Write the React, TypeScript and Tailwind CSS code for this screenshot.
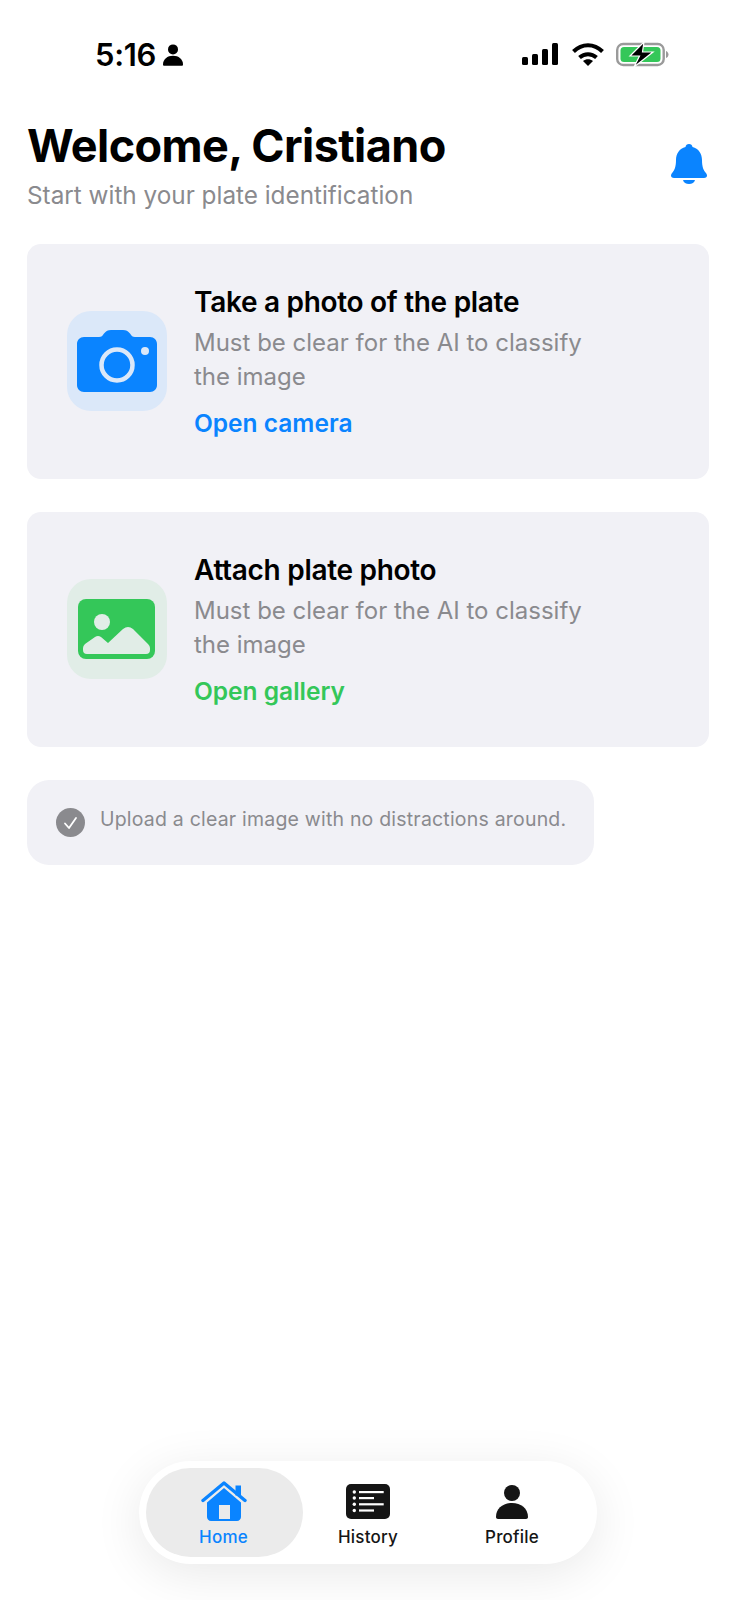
const CameraIcon = () => (
    <svg width="80" height="62" viewBox="0 0 80 62" aria-hidden="true">
        <path fillRule="evenodd" fill="#0a84ff" d="M7 7h15c2.500 0 3.500-1 5-3.500C29 1 31 0 34 0h12c3 0 5 1 7 3.500 1.500 2.500 2.500 3.500 5 3.500h15c4 0 7 3 7 7v41c0 4-3 7-7 7H7c-4 0-7-3-7-7V14c0-4 3-7 7-7Z" />
        <circle cx="40" cy="35" r="15.500" fill="none" stroke="#dbe8f9" strokeWidth="4.500" />
        <circle cx="68" cy="21" r="4" fill="#dbe8f9" />
    </svg>
)

const GalleryIcon = () => (
    <svg className="-ml-[1px]" width="77" height="60" viewBox="0 0 77 60" aria-hidden="true">
        <rect width="77" height="60" rx="8" fill="#34c759" />
        <circle cx="24" cy="23" r="8" fill="#e1ede7" />
        <path fill="#e1ede7" d="M5 49Q5 47 7 45L17 38Q20 36 23 38L30 44 45 30Q50 26 55 30L70 45Q72 47 72 49V51Q72 55 68 55H9Q5 55 5 51Z" />
    </svg>
)

const HomeIcon = () => (
    <svg className="-mb-[2px]" width="46" height="40" viewBox="0 0 46 40" aria-hidden="true">
        <path fillRule="evenodd" fill="#0a84ff" d="M23 7 6 21.500V36c0 2.200 1.800 4 4 4h26c2.200 0 4-1.800 4-4V21.500L23 7Zm-5 17h11v14H18V24Z" />
        <path fill="none" stroke="#0a84ff" strokeWidth="3.400" strokeLinecap="round" strokeLinejoin="round" d="M2 19.500 23 2l21 17.500" />
        <rect x="34.500" y="4.500" width="5.500" height="10" fill="#0a84ff" />
    </svg>
)

const HistoryIcon = () => (
    <svg width="44" height="35" viewBox="0 0 44 35" aria-hidden="true">
        <rect width="44" height="35" rx="5" fill="#151515" />
        <g fill="#fff">
            <circle cx="8.300" cy="8" r="1.700" /><circle cx="8.300" cy="14" r="1.700" /><circle cx="8.300" cy="20.300" r="1.700" /><circle cx="8.300" cy="26.500" r="1.700" />
            <rect x="13" y="7" width="24.700" height="2.200" /><rect x="13" y="13" width="15" height="2.200" /><rect x="13" y="19.200" width="24.700" height="2.200" /><rect x="13" y="25.400" width="15" height="2.200" />
        </g>
    </svg>
)

const ProfileIcon = ({ className }: { className: string }) => (
    <svg className={className} viewBox="0 0 32 34" aria-hidden="true">
        <circle cx="16" cy="8" r="8" fill="currentColor" />
        <path fill="currentColor" d="M0 32c0-8.500 7-14 16-14s16 5.500 16 14c0 1.200-.8 2-2 2H2c-1.200 0-2-.8-2-2Z" />
    </svg>
)

const StatusIcons = () => (
    <div className="mb-[2px] flex items-center">
        <svg width="36" height="22" viewBox="0 0 36 22" aria-hidden="true">
            <rect x="0" y="14" width="6" height="8" rx="1.500" fill="#000" />
            <rect x="10" y="11" width="6" height="11" rx="1.500" fill="#000" />
            <rect x="20" y="6" width="6" height="16" rx="1.500" fill="#000" />
            <rect x="30" y="0" width="6" height="22" rx="1.500" fill="#000" />
        </svg>
        <svg className="ml-[14px]" width="32" height="23" viewBox="0 0 32 23" aria-hidden="true">
            <path fill="none" stroke="#000" strokeWidth="4" d="M1.500 8.500C10 0 22 0 30.500 8.500" />
            <path fill="none" stroke="#000" strokeWidth="4" d="M7.500 14.500c5-4.500 12-4.500 17 0" />
            <path fill="#000" d="M11 18c3-2.500 7-2.500 10 0l-5 5Z" />
        </svg>
        <svg className="ml-[12px]" width="53" height="25" viewBox="0 0 53 25" aria-hidden="true">
            <rect x="1.200" y="2" width="46.500" height="21" rx="6" fill="none" stroke="#9a9a9a" strokeWidth="2.400" />
            <rect x="4.500" y="5" width="40" height="15" rx="3.500" fill="#34c759" />
            <path d="M50 9v7c1.500-.5 2.500-2 2.500-3.500S51.500 9.500 50 9Z" fill="#9a9a9a" />
            <path d="M28 0 14 14h9.500L18 25 37 10H26.500Z" fill="#000" stroke="#fff" strokeWidth="1.200" />
        </svg>
    </div>
)

const BellIcon = () => (
    <svg width="36" height="40" viewBox="0 0 36 40" aria-hidden="true">
        <path fill="#0a84ff" d="M18 0c2 0 3.200 1.300 3.500 3C27.500 4.500 31 9.500 31 16c0 7 1.500 10 3.500 12.500 1 1.200 1.500 2.200 1.500 3 0 1.500-1 2.500-3 2.500H3c-2 0-3-1-3-2.500 0-.8.500-1.800 1.500-3C3.500 26 5 23 5 16 5 9.500 8.500 4.500 14.500 3 14.800 1.300 16 0 18 0Z" />
        <path fill="#0a84ff" d="M12 36h12c-.5 2.500-3 4-6 4s-5.500-1.500-6-4Z" />
    </svg>
)

function ActionCard({ icon, tile, title, link, linkColor }: { icon: React.ReactNode, tile: string, title: string, link: string, linkColor: string }) {
    return (
        <div className="flex h-[235px] items-center rounded-[14px] bg-[#f1f1f6] pl-10">
            <div className={`mb-[2px] flex h-[100px] w-[100px] shrink-0 items-center justify-center rounded-[24px] ${tile}`}>{icon}</div>
            <div className="ml-[27px] w-[420px]">
                <div className="text-[28px] leading-[34px] font-semibold tracking-[-0.3px] text-black">{title}</div>
                <div className="mt-[7px] text-[24px] leading-[34px] text-[#8a8a8e]">Must be clear for the AI to classify the image</div>
                <div className={`mt-[13px] text-[24.500px] leading-[32px] font-semibold ${linkColor}`}>{link}</div>
            </div>
        </div>
    )
}

function NavItem({ icon, label, active, className }: { icon: React.ReactNode, label: string, active?: boolean, className?: string }) {
    return (
        <div className={`flex h-[89px] flex-col items-center justify-end rounded-full pb-[9px] ${active ? 'w-[157px] bg-[#ebebeb] pr-[2px] text-[#0a84ff]' : 'w-[144px] text-[#151515]'} ${className ?? ''}`}>
            <div className="flex h-[44px] items-end">{icon}</div>
            <div className="mt-[7px] text-[17px] leading-[22px] font-medium tracking-[0.2px]">{label}</div>
        </div>
    )
}

export default function App() {
    return (
        <div className="flex h-[1600px] w-[736px] flex-col bg-white font-['Inter',sans-serif]">
            <div className="flex h-[110px] items-center justify-between pr-[67px] pl-[95px]">
                <div className="flex items-center">
                    <span className="text-[31px] font-semibold tracking-[-0.3px] text-black">5:16</span>
                    <ProfileIcon className="ml-[7px] h-[22px] w-[20px] text-black" />
                </div>
                <StatusIcons />
            </div>

            <div className="mt-[10px] flex items-start justify-between pr-[29px] pl-[27px]">
                <div>
                    <h1 className="text-[45px] leading-[52px] font-bold tracking-[-0.6px] text-black">Welcome, Cristiano</h1>
                    <p className="mt-[6px] text-[24.300px] leading-[34px] text-[#8a8a8e]">Start with your plate identification</p>
                </div>
                <div className="mt-[24px]"><BellIcon /></div>
            </div>

            <div className="mt-[32px] flex flex-col gap-[33px] pr-[27px] pl-[27px]">
                <ActionCard icon={<CameraIcon />} tile="bg-[#dbe8f9]" title="Take a photo of the plate" link="Open camera" linkColor="text-[#0a84ff]" />
                <ActionCard icon={<GalleryIcon />} tile="bg-[#e1ede7]" title="Attach plate photo" link="Open gallery" linkColor="text-[#34c759]" />
            </div>

            <div className="mt-[33px] ml-[27px] flex h-[85px] w-[567px] items-center rounded-[22px] bg-[#f1f1f6] pl-[29px]">
                <svg width="29" height="29" viewBox="0 0 29 29" aria-hidden="true">
                    <circle cx="14.500" cy="14.500" r="14.500" fill="#8a8a8e" />
                    <path d="M9 15.500l4 4.500 7-10" fill="none" stroke="#fff" strokeWidth="1.800" strokeLinecap="round" strokeLinejoin="round" />
                </svg>
                <span className="mb-[6px] ml-[15px] text-[19.500px] tracking-[0.2px] text-[#8a8a8e]">Upload a clear image with no distractions around.</span>
            </div>

            <div className="mt-auto mb-[36px] flex h-[103px] w-[458px] items-center self-center rounded-full bg-white pl-[7px] shadow-[0_10px_50px_rgba(0,0,0,0.09)]">
                <NavItem active icon={<HomeIcon />} label="Home" />
                <NavItem className="-ml-[7px]" icon={<HistoryIcon />} label="History" />
                <NavItem icon={<ProfileIcon className="h-[34px] w-[32px]" />} label="Profile" />
            </div>
        </div>
    )
}
